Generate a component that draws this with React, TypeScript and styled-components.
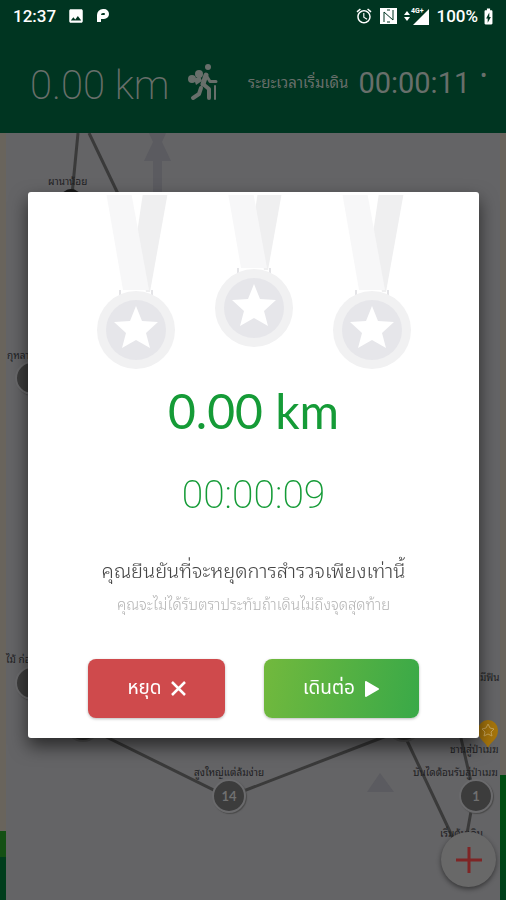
import React from "react";
import styled, { createGlobalStyle } from "styled-components";
import { MdAlarm, MdImage, MdBatteryChargingFull } from "react-icons/md";

const thai = `"Noto Sans Thai", Roboto, "Noto Sans", sans-serif`;
const looped = `"Noto Sans Thai Looped", "Noto Looped Thai", Loma, Garuda, Waree, "Noto Sans Thai", Roboto, sans-serif`;

const GlobalStyle = createGlobalStyle`
  * { box-sizing: border-box; }
  body { margin: 0; background: #646466; font-family: ${thai}; }
  button { font: inherit; border: 0; padding: 0; cursor: pointer; }
`;

const Page = styled.main`
  display: flex;
  flex-direction: column;
  min-height: 100vh;
  background: #646466;
`;

const TopArea = styled.header`
  background: #003521;
`;

const StatusBar = styled.div`
  display: flex;
  justify-content: space-between;
  align-items: center;
  height: 32px;
  padding: 0 8px 0 13px;
  color: #fff;
  font: 500 17px/32px Roboto, sans-serif;
`;

const StatusGroup = styled.div<{ $gap: number }>`
  display: flex;
  align-items: center;
  gap: ${({ $gap }) => $gap}px;
`;

const Stats = styled.div`
  display: flex;
  align-items: center;
  justify-content: space-between;
  height: 101px;
  padding: 0 19px 0 30px;
  color: #686f6b;
`;

const StatGroup = styled.div<{ $gap: number }>`
  display: flex;
  align-items: center;
  gap: ${({ $gap }) => $gap}px;
  white-space: nowrap;
`;

const Distance = styled.span`
  padding-top: 6px;
  font: 200 40px/48px Roboto, sans-serif;
`;

const StartLabel = styled.span`
  padding-bottom: 4px;
  font: 400 15px/24px ${looped};
`;

const Clock = styled.time`
  font: 400 29px/40px Roboto, sans-serif;
`;

const Marker = styled.span`
  align-self: flex-start;
  font: 400 20px/24px Roboto, sans-serif;
`;

const MapArea = styled.section`
  position: relative;
  flex: 1;
  overflow: hidden;
`;

const Trail = styled.svg`
  position: absolute;
  left: 0;
  top: 0;
`;

const Edge = styled.div<{ $side: "left" | "right" }>`
  position: absolute;
  top: 0;
  bottom: 0;
  ${({ $side }) => $side}: 0;
  width: 6px;
  background: ${({ $side }) =>
    $side === "left"
      ? "linear-gradient(#69645c 0 698px, #145014 698px 724px, #003d1c 724px)"
      : "linear-gradient(#69645c 0 642px, #004d12 642px 680px, #00401c)"};
`;

const MapLabel = styled.span<{ $x: number; $y: number }>`
  position: absolute;
  left: ${({ $x }) => $x}px;
  top: ${({ $y }) => $y}px;
  color: #202022;
  font: 400 10px/14px ${looped};
  white-space: nowrap;
`;

const Stop = styled.button<{ $x: number; $y: number }>`
  position: absolute;
  left: ${({ $x }) => $x}px;
  top: ${({ $y }) => $y}px;
  width: 34px;
  height: 34px;
  border: 2px solid #6a6a6c;
  border-radius: 50%;
  background: #3c3c3c;
  color: #707070;
  font: 700 13px/30px Lato, sans-serif;
  box-shadow: 1px 1px 1px #4a4a4a;
`;

const AddButton = styled.button`
  position: absolute;
  right: 10px;
  bottom: 13px;
  display: grid;
  place-items: center;
  width: 55px;
  height: 55px;
  border-radius: 50%;
  background: #686868;
  box-shadow: 0 2px 5px #0007;
`;

const Overlay = styled.div`
  position: fixed;
  inset: 0;
  display: flex;
  align-items: center;
  padding: 30px 27px 0 28px;
`;

const Dialog = styled.div`
  flex: 1;
  display: flex;
  flex-direction: column;
  align-items: center;
  padding-bottom: 20px;
  border-radius: 3px;
  background: #fff;
  box-shadow: 0 8px 18px #0009;
  text-align: center;
`;

const Medals = styled.svg`
  display: block;
  width: 320px;
  height: 180px;
`;

const Total = styled.h1`
  margin: 7px 0 0;
  color: #159b37;
  font: 400 48px/64px Lato, sans-serif;
`;

const Elapsed = styled.time`
  margin-top: 20px;
  color: #159b37;
  font: 200 39px/64px Roboto, sans-serif;
`;

const Question = styled.p`
  margin: 26px 0 0;
  color: #444;
  font: 300 20px/32px ${looped};
  white-space: nowrap;
`;

const Note = styled.p`
  margin: 6px 0 0;
  color: #b4b4b4;
  font: 300 15px/24px ${looped};
  white-space: nowrap;
`;

const Actions = styled.div`
  display: flex;
  gap: 39px;
  margin-top: 44px;
`;

const ActionButton = styled.button<{ $kind: "stop" | "go" }>`
  display: flex;
  align-items: center;
  justify-content: center;
  gap: 9px;
  width: ${({ $kind }) => ($kind === "stop" ? 137 : 155)}px;
  height: 59px;
  border-radius: 8px;
  background: ${({ $kind }) =>
    $kind === "stop" ? "#cf4a4c" : "linear-gradient(100deg, #72b93d, #39a948)"};
  box-shadow: 0 1px 3px #0004;
  color: #fff;
  && { font: 400 19px/32px ${thai}; }
`;

const Medal = ({ x, y }: { x: number; y: number }) => (
  <g transform={`translate(${x} ${y})`}>
    <path d="M0-90 8-144H33L14-38H10Z" fill="#efeff0" />
    <path d="M-31-144H-6L13-40H-13Z" fill="#f7f7f8" />
    <path d="M-16-34V-40M16-34V-40" stroke="#e4e4e7" strokeWidth="2" fill="none" />
    <circle r="39" fill="#f1f1f2" />
    <circle r="30" fill="#e6e6ea" />
    <path d="M0-24 6-9 22-8 10 3 14 18 0 10-14 18-10 3-22-8-6-9Z" fill="#fff" />
  </g>
);

const Hiker = () => (
  <svg width="31" height="37" viewBox="0 0 31 37" aria-hidden="true">
    <g fill="#686f6b">
      <circle cx="20" cy="3" r="3" />
      <circle cx="11" cy="10" r="4" />
      <circle cx="4" cy="15" r="4" />
      <path d="M6 15 12 12 14 17 8 21Z" />
    </g>
    <g fill="none" stroke="#686f6b" strokeLinecap="round" strokeLinejoin="round">
      <path d="M18 11 15 20" strokeWidth="5" />
      <path d="M18 11 22 17.500H28" strokeWidth="3" />
      <path d="M15 20 21 25V34M13 24 11 30 5 34" strokeWidth="4" />
      <path d="M27 22V35" strokeWidth="2" />
    </g>
  </svg>
);

export default function App() {
  return (
    <>
      <GlobalStyle />
      <Page>
        <TopArea>
          <StatusBar>
            <StatusGroup $gap={11}>
              <span>12:37</span>
              <MdImage size={18} />
              <svg width="14" height="16" viewBox="0 0 14 16" aria-hidden="true">
                <path d="M3 14V7A4 4 0 0 1 7 3H8A3 3 0 0 1 8 9H4" fill="none" stroke="#fff" strokeWidth="4" strokeLinejoin="round" />
              </svg>
            </StatusGroup>
            <StatusGroup $gap={7}>
              <MdAlarm size={18} />
              <svg width="17" height="16" viewBox="0 0 17 16" aria-hidden="true">
                <path d="M0 0h17v16H0Z" fill="#fff" />
                <path d="M4 14V4L13 12V2M7 2H10M7 14H10" fill="none" stroke="#003521" strokeWidth="1" />
              </svg>
              <svg width="25" height="18" viewBox="0 0 25 18" aria-hidden="true">
                <path d="M0 8 3 4 6 8ZM0 10H6L3 14Z M9 18 25 2V18Z" fill="#fff" />
                <text x="7" y="6" fill="#fff" fontFamily="Roboto" fontWeight="700" fontSize="7">4G+</text>
              </svg>
              <StatusGroup $gap={1}>
                <span>100%</span>
                <MdBatteryChargingFull size={19} />
              </StatusGroup>
            </StatusGroup>
          </StatusBar>
          <Stats>
            <StatGroup $gap={18}>
              <Distance>0.00 km</Distance>
              <Hiker />
            </StatGroup>
            <StatGroup $gap={10}>
              <StartLabel>ระยะเวลาเริ่มเดิน</StartLabel>
              <Clock>00:00:11</Clock>
              <Marker>•</Marker>
            </StatGroup>
          </Stats>
        </TopArea>
        <MapArea>
          <Edge $side="left" />
          <Edge $side="right" />
          <Trail width="506" height="767" viewBox="0 133 506 767" aria-hidden="true">
            <path d="M149 133h17l-4 9 9 19h-9v31h-9v-31h-9l9-19Z" fill="#5b5b60" />
            <path d="m380 773-13 19h27Z" fill="#5b5b60" />
            <path d="M78 133 72 195M89 133 120 198M82 725 228 797 402 730M402 730 453 838M458 725 474 795 464 850" fill="none" stroke="#3a3a3a" strokeWidth="3" />
            <ellipse cx="71" cy="197" rx="9" ry="8" fill="#181818" />
            <circle cx="83" cy="724" r="17" fill="#303030" stroke="#555" strokeWidth="2" />
            <circle cx="404" cy="724" r="17" fill="#303030" stroke="#555" strokeWidth="2" />
            <path d="M488 748c-2-6-10-8-10-18a10 10 0 0 1 20 0c0 10-8 12-10 18Z" fill="#a6750c" />
            <path d="m488 724 2 4 4 1-3 3 1 4-4-2-4 2 1-4-3-3 4-1Z" fill="none" stroke="#c8a55a" strokeWidth="1" />
          </Trail>
          <MapLabel $x={48} $y={41}>ผานาน้อย</MapLabel>
          <MapLabel $x={7} $y={215}>กุหลาบ</MapLabel>
          <MapLabel $x={6} $y={519}>ไม้ ก่อ</MapLabel>
          <MapLabel $x={480} $y={537}>มีฟิน</MapLabel>
          <MapLabel $x={450} $y={609}>ชานสู่ป่าเมฆ</MapLabel>
          <MapLabel $x={413} $y={632}>บันไดต้อนรับสู่ป่าเมฆ</MapLabel>
          <MapLabel $x={194} $y={632}>สูงใหญ่แต่ล้มง่าย</MapLabel>
          <MapLabel $x={440} $y={693}>เริ่มต้นเดิน</MapLabel>
          <Stop $x={15} $y={228} aria-label="1" />
          <Stop $x={15} $y={533} aria-label="1" />
          <Stop $x={212} $y={646}>14</Stop>
          <Stop $x={459} $y={646}>1</Stop>
          <AddButton aria-label="+">
            <svg width="28" height="28" viewBox="0 0 28 28">
              <path d="M14 1V27M1 14H27" stroke="#7e2525" strokeWidth="3" />
            </svg>
          </AddButton>
        </MapArea>
      </Page>
      <Overlay>
        <Dialog role="dialog" aria-modal="true">
          <Medals viewBox="93 192 320 180" aria-hidden="true">
            <Medal x={135} y={330} />
            <Medal x={253} y={308} />
            <Medal x={371} y={330} />
            <path d="M93 192h320v3H93Z" fill="#fff" />
          </Medals>
          <Total>0.00 km</Total>
          <Elapsed>00:00:09</Elapsed>
          <Question>คุณยืนยันที่จะหยุดการสำรวจเพียงเท่านี้</Question>
          <Note>คุณจะไม่ได้รับตราประทับถ้าเดินไม่ถึงจุดสุดท้าย</Note>
          <Actions>
            <ActionButton $kind="stop">
              หยุด
              <svg width="15" height="15" viewBox="0 0 15 15" aria-hidden="true">
                <path d="m1 1 13 13M14 1 1 14" stroke="#fff" strokeWidth="2.500" />
              </svg>
            </ActionButton>
            <ActionButton $kind="go">
              เดินต่อ
              <svg width="16" height="16" viewBox="0 0 16 16" aria-hidden="true">
                <path d="M2 1v14L14 8Z" fill="#fff" stroke="#fff" strokeWidth="2" strokeLinejoin="round" />
              </svg>
            </ActionButton>
          </Actions>
        </Dialog>
      </Overlay>
    </>
  );
}
